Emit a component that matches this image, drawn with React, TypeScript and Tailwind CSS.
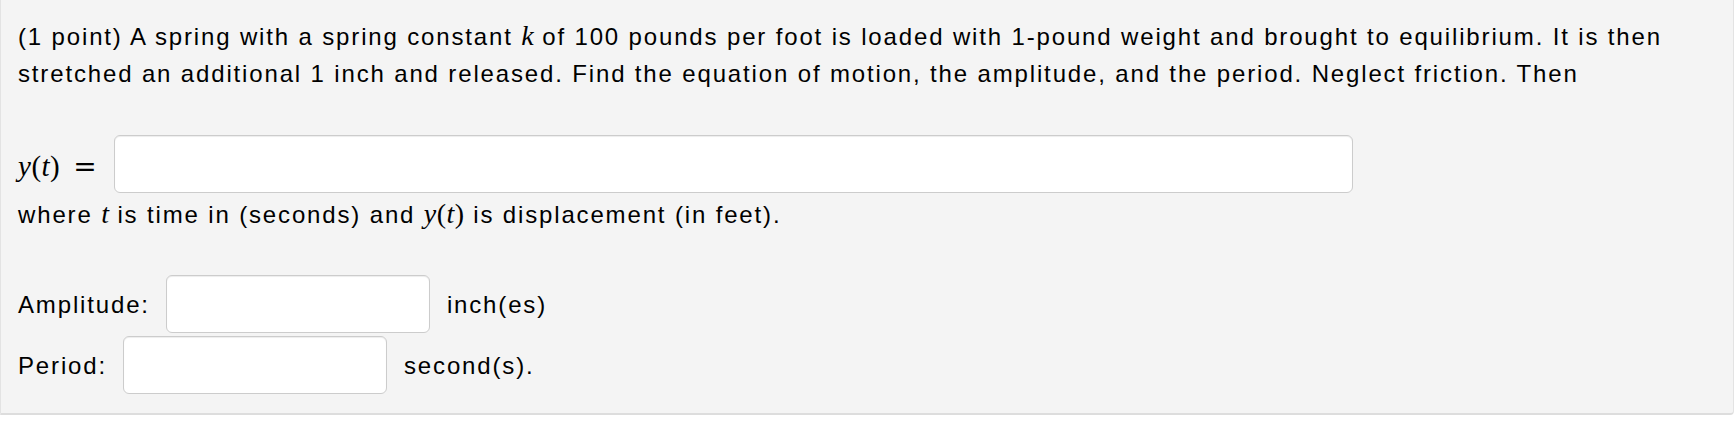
import React from "react";

const sans = { fontFamily: '"Liberation Sans", Arial, sans-serif' };
const serif = { fontFamily: '"Liberation Serif", "Times New Roman", serif' };

function MathI({ children }: { children: React.ReactNode }) {
  return (
    <span className="italic text-[28px] leading-none tracking-normal" style={serif}>
      {children}
    </span>
  );
}

function Field({ w }: { w: string }) {
  return (
    <input
      type="text"
      className={`${w} h-[58px] rounded-[6px] border-[1.5px] border-[#cccccc] bg-white shadow-[inset_0_1px_1px_rgba(0,0,0,0.075)] outline-none`}
    />
  );
}

export default function App() {
  return (
    <div className="w-[1734px] h-[422px] bg-white">
      <div
        className="h-[415px] bg-[#f4f4f4] border-l border-r border-b-2 border-l-[#e3e3e3] border-r-[#e3e3e3] border-b-[#dddddd] rounded-br-[4px] pl-[17px] pt-[18px] text-[24px] leading-[37px] tracking-[1.85px] text-black"
        style={sans}
      >
        <p>
          (1 point) A spring with a spring constant <MathI>k</MathI> of 100 pounds per foot is loaded with 1-pound weight and brought to equilibrium. It is then
          <br />
          stretched an additional 1 inch and released. Find the equation of motion, the amplitude, and the period. Neglect friction. Then
        </p>
        <div className="mt-[43px] flex items-center">
          <span className="mt-[5px] flex items-baseline text-[29px] leading-[37px] tracking-[0.5px]" style={serif}>
            <span className="italic">y</span>
            <span>(</span>
            <span className="italic">t</span>
            <span>)</span>
            <span
              className="ml-[13px] text-[28px] tracking-normal"
              style={{ fontFamily: '"DejaVu Serif", serif' }}
            >
              =
            </span>
          </span>
          <div className="ml-[17px]">
            <Field w="w-[1239px]" />
          </div>
        </div>
        <p className="mt-[3px]">
          where <MathI>t</MathI> is time in (seconds) and{" "}
          <span className="text-[28px] leading-none tracking-[0.5px]" style={serif}>
            <span className="italic">y</span>(<span className="italic">t</span>)
          </span>{" "}
          is displacement (in feet).
        </p>
        <div className="mt-[42px] flex items-center">
          <span>Amplitude:</span>
          <div className="ml-[16px]">
            <Field w="w-[264px]" />
          </div>
          <span className="ml-[17px]">inch(es)</span>
        </div>
        <div className="mt-[3px] flex items-center">
          <span>Period:</span>
          <div className="ml-[16px]">
            <Field w="w-[264px]" />
          </div>
          <span className="ml-[17px]">second(s).</span>
        </div>
      </div>
    </div>
  );
}
